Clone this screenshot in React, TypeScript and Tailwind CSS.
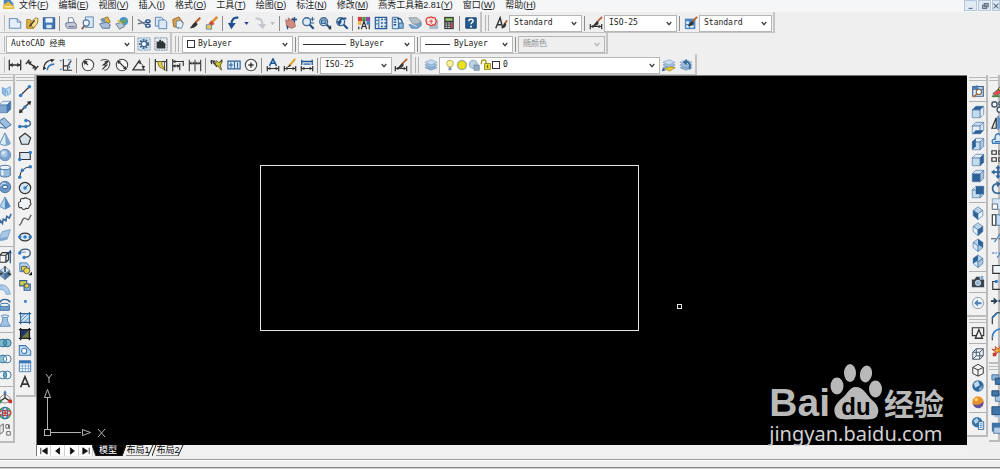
import type { ReactNode } from "react";

const menus = [
  ["文件", "F"],
  ["编辑", "E"],
  ["视图", "V"],
  ["插入", "I"],
  ["格式", "O"],
  ["工具", "T"],
  ["绘图", "D"],
  ["标注", "N"],
  ["修改", "M"],
  ["燕秀工具箱2.81", "Y"],
  ["窗口", "W"],
  ["帮助", "H"],
];

const NAVY = "#1d4f86";
const BLUE = "#2f7cc4";
const PALE = "#c9def0";
const STEEL = "#7fa6cc";
const INK = "#333";
const GOLD = "#e3b53a";

// top, left and right faces of a cube
const cube = (top: string, left: string, right: string) => (
  <g stroke="#3f6d9c" strokeWidth=".7">
    <path d="M8 1l5.500 4L8 9 2.500 5z" fill={top} />
    <path d="M2.500 5L8 9v6.500L2.500 11z" fill={left} />
    <path d="M13.500 5L8 9v6.500l5.500-4.500z" fill={right} />
  </g>
);

// front, top and side faces of a box seen from the front left
const box = (front: string, top: string, side: string) => (
  <g stroke="#3f6d9c" strokeWidth=".7">
    <path d="M1.500 5.500h9v9h-9z" fill={front} />
    <path d="M1.500 5.500l4-4h9l-4 4z" fill={top} />
    <path d="M10.500 5.500l4-4v9l-4 4z" fill={side} />
  </g>
);

const brush = (
  <>
    <path d="M15 1L9 7" stroke="#b5622d" strokeWidth="2" />
    <path d="M10 6c-3 0-3 4-6 5 3 1 7 0 7-4z" fill={INK} />
  </>
);

const dimension = (
  <>
    <path d="M1.500 9v6M14.500 9v6M2 12h12" stroke={INK} strokeWidth="1.400" />
    <path d="M2 12l3-2v4zM14 12l-3-2v4z" fill={INK} />
  </>
);

const rings = (a: string, b: string, c: string) => (
  <>
    <circle cx="5.500" cy="8" r="4.500" fill={a} />
    <circle cx="10.500" cy="8" r="4.500" fill={b} />
    <path d="M8 4.300a4.500 4.500 0 010 7.400 4.500 4.500 0 010-7.400z" fill={c} />
    <circle cx="5.500" cy="8" r="4.500" fill="none" stroke="#2b6b91" />
    <circle cx="10.500" cy="8" r="4.500" fill="none" stroke="#2b6b91" />
  </>
);

const layers = (
  <g stroke="#5c87b3" strokeWidth=".6">
    <path d="M1 11l7-3 7 3-7 3z" fill="#8fb2d6" />
    <path d="M1 8l7-3 7 3-7 3z" fill="#a9c6e2" />
    <path d="M1 5l7-3 7 3-7 3z" fill={PALE} />
  </g>
);

const lens = (
  <>
    <circle cx="6.500" cy="6.500" r="4.500" fill="#dcebf7" stroke="#3d678f" strokeWidth="1.500" />
    <path d="M10 10l4.500 4.500" stroke={NAVY} strokeWidth="2.400" />
  </>
);

const dot = (x: number, y: number) => <circle cx={x} cy={y} r="2" fill={BLUE} />;

const icons: Record<string, ReactNode> = {
  new: <path d="M1.500 3h9l4 4v7h-13zM10.500 3v4h4" fill="#e2eefa" stroke="#5080b0" />,
  open: (
    <>
      <path d="M2 14V4h4l1 2h6l-3 8z" fill={GOLD} stroke="#9a7422" />
      <path d="M6 8l6-6 3 1-1 6-5 5z" fill="#f5df8d" stroke="#9a7422" />
      <path d="M5 12l6-7" stroke={INK} strokeWidth="1.500" />
    </>
  ),
  save: (
    <>
      <path d="M1.500 2h13v12.500h-13z" fill="#3f78b8" stroke={NAVY} />
      <path d="M4 2.500h8v5H4z" fill="#f0f6fc" />
      <path d="M5 10h6v4H5z" fill="#dbe6f2" />
    </>
  ),
  print: (
    <>
      <path d="M5 2h5l2 6H5z" fill="#fff" stroke="#6c7794" />
      <path d="M2 8l9-1 3 2v5H4l-2-2z" fill="#c5cad9" stroke="#626b88" />
      <path d="M5 12h7" stroke="#626b88" />
    </>
  ),
  preview: (
    <>
      <path d="M5 1h9v12H5z" fill="#dceafa" stroke="#5080b0" />
      <circle cx="6" cy="8" r="3.500" fill="#eef6fd" stroke="#4f7599" strokeWidth="1.300" />
      <path d="M4 11l-3 4" stroke="#7c6047" strokeWidth="2" />
    </>
  ),
  publish: (
    <>
      <path d="M3 4l8-3 3 6-4 3z" fill={GOLD} stroke="#8c6a20" />
      <path d="M2 9l8-2 4 3-1 4H5z" fill="#a9bfd9" stroke="#526b8c" />
      <circle cx="6" cy="5" r="2.500" fill="#6799c9" />
    </>
  ),
  globe: (
    <>
      <circle cx="10" cy="6" r="5" fill="#4a97c9" />
      <path d="M6 4c4 3 5-3 7 1l-3 5z" fill="#6ba653" />
      <path d="M1 9l7-2 3 5-6 3z" fill="#b9c6d8" stroke="#657894" />
      <path d="M3 5l4 3" stroke={GOLD} strokeWidth="2" />
    </>
  ),
  cut: (
    <>
      <path d="M1 4l9 6M1 9l9-2" stroke="#60707f" strokeWidth="1.600" />
      <ellipse cx="12.500" cy="6" rx="2.500" ry="1.600" fill="none" stroke={NAVY} strokeWidth="1.500" />
      <ellipse cx="12.500" cy="11" rx="2.500" ry="1.800" fill="none" stroke={NAVY} strokeWidth="1.500" />
    </>
  ),
  copy: (
    <g fill="#dbe9f7" stroke="#4b7dae">
      <path d="M1.500 1.500h7l2 2v8h-9z" />
      <path d="M5.500 4.500h7l2 2v8h-9z" />
    </g>
  ),
  paste: (
    <>
      <path d="M2 4l7-3 5 7-5 6-6-2z" fill="#d8a24b" stroke="#8e6428" />
      <path d="M6 6l5-1 3 4-2 5-6-1z" fill="#e6f0fa" stroke="#5e85ad" />
    </>
  ),
  match: (
    <>
      <path d="M14 2L8 8" stroke="#b5622d" strokeWidth="2.500" />
      <path d="M9 7c-3 0-4 4-7 7 4 0 8-2 9-5z" fill={INK} />
    </>
  ),
  block: (
    <>
      <path d="M14 1L8 7" stroke="#d5902f" strokeWidth="3" />
      <path d="M7 5l4 4-4 2-3-2z" fill="#d4482c" />
      <path d="M1.500 10h6v5h-6z" fill="#f3c84a" stroke="#5080b0" />
    </>
  ),
  undo: (
    <>
      <path d="M13 2C8 1 5 4 5 10" fill="none" stroke="#1f4f92" strokeWidth="2.600" />
      <path d="M1 8h9l-5 7z" fill="#1f4f92" />
    </>
  ),
  redo: (
    <>
      <path d="M3 3c5-1 8 2 8 7" fill="none" stroke="#c3c6ca" strokeWidth="2.400" />
      <path d="M6 9h9l-4 6z" fill="#c3c6ca" />
    </>
  ),
  pan: (
    <>
      <path d="M2 4l3 2V2l3 3 2-3 2 5 1 5-4 2-6-2z" fill="#d28c80" stroke="#a0685f" />
      <path d="M12 1v6M9 4h6M4 11v4" stroke={NAVY} strokeWidth="1.500" />
    </>
  ),
  zoom: (
    <>
      {lens}
      <path d="M13 1v5M10.500 3.500h5M11 8h4" stroke={NAVY} />
    </>
  ),
  zoomWindow: (
    <>
      {lens}
      <path d="M4 4.500h5v4H4z" fill="#8db4db" stroke={NAVY} />
      <path d="M12 15l3-5v5z" fill={INK} />
    </>
  ),
  zoomBack: (
    <>
      {lens}
      <path d="M5 8c0-4 3-6 8-5" fill="none" stroke={NAVY} strokeWidth="2" />
      <path d="M2 6h6l-3 5z" fill={NAVY} />
    </>
  ),
  props: (
    <>
      <path d="M1 1h5v5H1z" fill="#d33d39" />
      <path d="M6 1h4v5H6z" fill="#4c9f50" />
      <path d="M10 1h5v5h-5z" fill="#8a4da1" />
      <path d="M1 6h4v4H1z" fill={GOLD} />
      <path d="M11 6h4v4h-4z" fill="#367fc4" />
      <path d="M5 15l3-9 3 9M6 12h4M2 12v3M14 10v5" fill="none" stroke={INK} strokeWidth="1.400" />
    </>
  ),
  center: (
    <>
      <path d="M1.500 1.500h13v13h-13z" fill="#d9e9f8" stroke="#2c5f94" strokeWidth="1.400" />
      <path d="M5.500 2v12M2 5h3M2 9h3" stroke="#2c5f94" />
      <path d="M8 4h2M12 4h2M8 8h2M12 8h2M8 12h2M12 12h2" stroke={NAVY} strokeWidth="1.800" />
    </>
  ),
  palettes: (
    <>
      <path d="M1.500 1.500h7v13h-7z" fill="#d9e9f8" stroke="#2c5f94" />
      <path d="M3 4h3M3 7h3M3 10h3" stroke={NAVY} strokeWidth="1.600" />
      <path d="M7 3c4-1 6 2 6 6" fill="none" stroke={NAVY} strokeWidth="1.600" />
      <path d="M9 8h5v6H9z" fill="#8fb7de" stroke="#2c5f94" />
    </>
  ),
  sheets: (
    <>
      <path d="M1 2h9l5 4-3 3H5z" fill="#b4bfc8" stroke="#8a98a4" />
      <path d="M1 10h10l4-3v4l-4 3H4z" fill="#6fa5cf" stroke="#5d86a8" />
      <path d="M2 8l8 4" stroke="#f3f7fa" />
    </>
  ),
  markup: (
    <>
      <path d="M5 4h10v11H5z" fill="#a9bccb" />
      <path d="M2 3q1-2 3-1 2-2 4 0 3-1 3 2 2 2 0 4 0 3-3 2-2 2-4 0-4 0-3-3-2-2 0-4z" fill="#fbe3e0" stroke="#de3c3c" strokeWidth="1.400" />
      <path d="M5 6h4M7 4v5" stroke="#de3c3c" />
    </>
  ),
  calc: (
    <>
      <path d="M2.500 1h11v14h-11z" fill="#343a3d" />
      <path d="M4 2.500h8v3H4z" fill="#95c96b" />
      <path d="M4 8h8M4 10.500h8M4 13h8" stroke="#d9dddd" strokeWidth="1.300" strokeDasharray="2 1" />
      <path d="M10 7.500h2V14h-2z" fill="#bf4e43" />
    </>
  ),
  help: (
    <>
      <path d="M2 2h12v12H2z" fill="#24598f" stroke="#153d68" />
      <path d="M5.500 6c0-3 5-3 5-.5 0 2-2.500 2-2.500 4" fill="none" stroke="#fff" strokeWidth="1.600" />
      <path d="M7 11h2v2H7z" fill="#fff" />
    </>
  ),
  textStyle: (
    <>
      <path d="M2 14l5-12 3 12M4 10h5" fill="none" stroke={INK} strokeWidth="1.600" />
      <path d="M15 5l-3 4" stroke="#b5622d" strokeWidth="2" />
      <path d="M13 8c-3 0-2 4-5 6 4 0 6-2 6-5z" fill={INK} />
    </>
  ),
  dimStyle: (
    <>
      {dimension}
      {brush}
    </>
  ),
  tableStyle: (
    <>
      <path d="M1 3h12v12H1z" fill="#4c86c2" />
      <path d="M2.500 6h3v3h-3zM2.500 10.500h3v3h-3zM7 10.500h4v3H7z" fill="#e3effa" />
      {brush}
    </>
  ),
  gear: (
    <>
      <path d="M1 1h14v14H1z" fill="#d5e4f1" stroke="#6990b5" strokeDasharray="2 1" />
      <circle cx="8" cy="8" r="4.500" fill="none" stroke="#3f6388" strokeWidth="2.500" strokeDasharray="2 1.200" />
      <circle cx="8" cy="8" r="3" fill="#f5f9fc" stroke="#3f6388" strokeWidth="1.200" />
    </>
  ),
  workspace: (
    <>
      <path d="M1 1h14v14H1z" fill="#e7edf2" stroke="#60768c" strokeDasharray="2 1" />
      <path d="M3 5h3V3h2v2l2-1 1 2 2 1v6H3z" fill="#2f3438" />
    </>
  ),
  dimLinear: (
    <>
      <path d="M1.500 2v12M14.500 2v12M2 8h12" stroke={INK} strokeWidth="1.500" />
      <path d="M2 8l3.500-2.500v5zM14 8l-3.500-2.500v5z" fill={INK} />
    </>
  ),
  dimAligned: (
    <>
      <path d="M1 7l4-5M11 14l4-5M4 5l8 6" stroke={INK} strokeWidth="1.600" />
      <path d="M3 4l5 0-3 4zM13 12l-5 0 3-4z" fill={INK} />
    </>
  ),
  dimArc: (
    <>
      <path d="M2 13C2 6 6 2 14 2" fill="none" stroke={INK} strokeWidth="1.300" />
      <path d="M6 14c0-4 3-7 8-7" fill="none" stroke={BLUE} strokeWidth="1.800" />
      <path d="M1 14l1-5 3 3zM14 2l-5-1 2 4z" fill={INK} />
    </>
  ),
  dimOrdinate: (
    <>
      <path d="M5 1v13h10M5 9h5l4-6M10 9v5" fill="none" stroke={INK} strokeWidth="1.300" />
      <path d="M1 3h3M1 13h2M10 2h4M12 6v6" stroke={BLUE} strokeWidth="1.400" strokeDasharray="2 1" />
    </>
  ),
  dimRadius: (
    <>
      <circle cx="8" cy="8" r="6.500" fill="#f7f7f7" stroke="#444" strokeWidth="1.200" />
      <path d="M8 8L4 4" stroke={INK} strokeWidth="1.300" />
      <path d="M3 3l5 1-4 4z" fill={INK} />
    </>
  ),
  dimJogged: (
    <>
      <path d="M3 3c6-3 12 0 10 6-1 3-3 5-6 5" fill="none" stroke="#555" strokeWidth="1.200" />
      <path d="M11 4L6 8h4l-5 5" fill="none" stroke={INK} strokeWidth="1.300" />
      <path d="M12 3l-5 1 3 3z" fill={INK} />
    </>
  ),
  dimDiameter: (
    <>
      <circle cx="8" cy="8" r="6.500" fill="#f7f7f7" stroke="#444" strokeWidth="1.200" />
      <path d="M4 4l8 8" stroke={INK} strokeWidth="1.300" />
      <path d="M3 3l4 1-3 3zM13 13l-4-1 3-3z" fill={INK} />
    </>
  ),
  dimAngular: (
    <>
      <path d="M15 13.500H1L9 2" fill="none" stroke={INK} strokeWidth="1.500" />
      <path d="M7 5c4 0 6 3 6 8" fill="none" stroke={INK} />
      <path d="M6 5l4-2v4zM13 13l-2-4h4z" fill={INK} />
    </>
  ),
  dimQuick: (
    <>
      <path d="M1.500 1v14M14.500 1v14M1 4h14" stroke={INK} strokeWidth="1.400" />
      <path d="M4 4l5 0 0 4 4 6-7-4z" fill="#e6d33c" stroke="#746d20" />
      <path d="M12 4v10" stroke={INK} />
    </>
  ),
  dimBaseline: (
    <>
      <path d="M2 1v14M10 6v8M14 3v6M2 4h12M2 9h8" stroke={INK} strokeWidth="1.300" />
      <path d="M2 4l3-2v4zM2 9l3-2v4zM10 9l-3-2v4z" fill={INK} />
    </>
  ),
  dimContinue: (
    <>
      <path d="M1.500 2v13M8 2v13M14.500 2v13M1 6h14" stroke={INK} strokeWidth="1.200" />
      <path d="M2 6l2-2v4zM7.500 6l-2-2v4zM8.500 6l2-2v4zM14 6l-2-2v4z" fill={INK} />
    </>
  ),
  leader: (
    <>
      <path d="M1 3l5 1M1 3l1 4M3 4l5 6M14 2l-4 5" stroke={INK} strokeWidth="1.500" />
      <path d="M7 3l3 2 4-1-2 4 1 6-4-5-3-1z" fill="#cfc333" stroke="#5f5b20" />
    </>
  ),
  tolerance: (
    <>
      <path d="M1 3.500h14v9H1z" fill="#dbe9f7" stroke="#2c6096" strokeWidth="1.300" />
      <path d="M8.500 4v8M2 8h5M4.500 5v6M12 5v6" stroke="#2c6096" strokeWidth="1.200" />
    </>
  ),
  centerMark: (
    <>
      <circle cx="8" cy="8" r="6.500" fill="#f7f7f7" stroke="#444" strokeWidth="1.200" />
      <path d="M8 5v6M5 8h6" stroke={INK} strokeWidth="1.600" />
    </>
  ),
  dimEdit: (
    <>
      {dimension}
      <path d="M4 9l4-8 4 8M6 6h4" fill="none" stroke="#1e5795" strokeWidth="1.800" />
    </>
  ),
  dimTextEdit: (
    <>
      {dimension}
      <path d="M14 1L7 9" stroke="#e0a22b" strokeWidth="2.400" />
      <path d="M8 7l-4 4 5-2z" fill={INK} />
    </>
  ),
  dimUpdate: (
    <>
      {dimension}
      <path d="M2 2v6M14 2v6M2 4h12" stroke="#1e5795" strokeWidth="1.500" />
      <path d="M4 7h8" stroke="#5588bd" strokeWidth="2" />
    </>
  ),
  layers,
  layerState: (
    <>
      {layers}
      <path d="M3 12l6-2 6 1-6 4z" fill="#e6cc35" stroke="#8b7a21" strokeWidth=".6" />
      <path d="M0 15l1-4 3 3z" fill={NAVY} />
    </>
  ),
  layerBack: (
    <>
      {layers}
      <path d="M12 13c2-6-1-9-4-9" fill="none" stroke="#3a6a9c" strokeWidth="2" />
      <path d="M4 5l5-4v7z" fill="#3a6a9c" />
    </>
  ),
  bulb: (
    <>
      <circle cx="8" cy="6" r="4.500" fill="#fbf19a" stroke="#a69a3d" />
      <path d="M6 11h4v4H6z" fill="#7e93ad" />
    </>
  ),
  sun: (
    <>
      <circle cx="8" cy="8" r="7" fill="#94bedf" />
      <circle cx="8" cy="8" r="5.500" fill="#efe21d" stroke="#b5a827" />
    </>
  ),
  freeze: (
    <>
      <circle cx="7" cy="7" r="5.500" fill="#bcd2e4" stroke="#7e99ae" />
      <path d="M8 8h7v7H8z" fill="#93adc3" stroke="#64849f" />
    </>
  ),
  lock: (
    <>
      <path d="M2 7V4c0-4 6-3 6 0v3" fill="none" stroke="#a89e20" strokeWidth="2" />
      <path d="M6 6h8v8H6z" fill="#e6da2e" stroke="#837a18" />
      <path d="M10 8v4" stroke="#6b641b" strokeWidth="1.500" />
    </>
  ),
  polysolid: (
    <>
      <path d="M5 4l4 2v8l-4-3z" fill="#8fbbe2" stroke="#6ba3d6" />
      <path d="M9 6l5-3v8l-3 2V8L9 9z" fill="#c6ddf1" stroke="#6ba3d6" />
    </>
  ),
  box: box("#7ea8d1", "#e4f0fa", "#3f77b0"),
  wedge: (
    <>
      <path d="M1 6l6-4 8 8-6 4z" fill="#9dbddc" stroke="#315f90" />
      <path d="M1 6v7l8 1z" fill="#d2e4f4" stroke="#315f90" />
    </>
  ),
  cone: (
    <>
      <path d="M8 1l6 12c-3 3-9 3-12 0z" fill="#dcebf7" stroke="#4d7baa" />
      <path d="M8 1l6 12c-1 1-3 2-5 2z" fill={STEEL} />
    </>
  ),
  sphere: (
    <>
      <circle cx="8" cy="8" r="6.500" fill="#7ba3cf" stroke="#5e88b8" />
      <circle cx="7" cy="6.500" r="4" fill="#a9c4e2" />
      <circle cx="6" cy="5.500" r="2" fill="#dce9f6" />
    </>
  ),
  cylinder: (
    <>
      <path d="M2 4v9c3 2.500 9 2.500 12 0V4z" fill="#9bbddd" stroke="#396a9d" />
      <ellipse cx="8" cy="4" rx="6" ry="2.500" fill="#e9f3fb" stroke="#396a9d" />
      <path d="M5 7v6" stroke="#eff6fc" strokeWidth="2" />
    </>
  ),
  torus: (
    <>
      <circle cx="8" cy="8" r="6.500" fill="#6d99c8" stroke="#44719f" />
      <ellipse cx="8" cy="8" rx="3" ry="2" fill="#eef5fb" stroke="#2c5c8e" />
      <path d="M3 7c1-3 3-4 6-3" fill="none" stroke="#cfe2f3" strokeWidth="1.500" />
    </>
  ),
  pyramid: (
    <>
      <path d="M8 1l6 11-6 3-6-3z" fill="#b7d3ec" stroke="#467aad" strokeWidth=".8" />
      <path d="M8 1l6 11-6 3z" fill="#4f87bf" />
    </>
  ),
  helix: <path d="M1 14l2-4 2 3 1-5 3 2 1-5 3 2 2-5" fill="none" stroke="#37699e" strokeWidth="1.800" />,
  planar: (
    <>
      <path d="M1 12l4-8 9-2-3 9z" fill="#a8c8e6" stroke="#6e9bc7" />
      <path d="M1 12l10-1v2L3 15z" fill={STEEL} />
    </>
  ),
  extrude: (
    <>
      <path d="M2 6h7v8H2zM2 6l3-3h7v8l-3 3M9 6l3-3" fill="#f5f8fa" stroke={INK} strokeWidth="1.400" />
      <path d="M14 15V2M12 4l2-3 1 3" stroke={NAVY} strokeWidth="1.400" fill="none" />
    </>
  ),
  presspull: (
    <>
      {cube("#dbe8f3", "#7395b6", "#4c7299")}
      <path d="M8 0v7M1 10l4-2M15 10l-4-2" stroke={INK} strokeWidth="1.600" />
    </>
  ),
  sweep: (
    <>
      <path d="M1 4c7-3 12 3 13 10h-5C9 10 6 8 1 9z" fill="#adcdea" stroke={STEEL} />
      <ellipse cx="2" cy="6.500" rx="1.500" ry="2.500" fill="#e9f3fb" stroke={STEEL} />
    </>
  ),
  revolve: (
    <>
      <path d="M2 8h11v6H2z" fill="#75a3cf" stroke="#2d6297" />
      <path d="M2 5c2-4 9-5 12 0" fill="none" stroke="#2d6297" strokeWidth="1.600" />
      <ellipse cx="7.500" cy="8" rx="5.500" ry="2" fill="#e9f3fb" stroke="#2d6297" />
    </>
  ),
  loft: (
    <>
      <path d="M4 2h8c-3 5 0 8 2 12H2C4 10 7 7 4 2z" fill="#a0c2e2" stroke="#5889ba" />
      <ellipse cx="8" cy="2.500" rx="4" ry="1.500" fill="#eaf3fb" stroke="#5889ba" />
    </>
  ),
  union: rings("#7fb9cf", "#7fb9cf", "#5d9fba"),
  subtract: rings("#8dc3d8", "#f3f6f8", "#f3f6f8"),
  intersect: rings("#f3f6f8", "#f3f6f8", "#6bafc9"),
  move3d: (
    <>
      <path d="M8 3v6l-6 4M8 9l6 4" fill="none" stroke={INK} strokeWidth="1.400" />
      <path d="M2 9l6-5 6 5v4l-6 2-6-2z" fill="none" stroke="#666" strokeWidth=".8" />
      <path d="M6 4l2-4 2 4z" fill={BLUE} />
      <path d="M0 11h4v4H0z" fill="#2d8850" />
      <path d="M12 11h4v4h-4z" fill="#cf2f2f" />
    </>
  ),
  rotate3d: (
    <g fill="none" strokeWidth="1.500">
      <circle cx="8" cy="8" r="6.500" stroke="#2f8c4b" />
      <ellipse cx="8" cy="8" rx="6.500" ry="3" stroke="#cf3b33" />
      <ellipse cx="8" cy="8" rx="3" ry="6.500" stroke="#2d6fb4" />
      <path d="M5 8h6M8 5v6" stroke="#cf3b33" />
    </g>
  ),
  align3d: (
    <>
      <path d="M2 5l4-3v9l-4 3z" fill="#eee" stroke="#555" />
      <path d="M9 3h3v4H9zM13 3v5M10 11h4v4h-4z" fill="#fff" stroke="#555" />
    </>
  ),
  line: (
    <>
      <path d="M3 13L13 3" stroke={INK} strokeWidth="1.600" />
      {dot(3, 13)}
      {dot(13, 3)}
    </>
  ),
  xline: (
    <>
      <path d="M2 14L14 2" stroke={INK} strokeWidth="1.600" />
      <path d="M1 15l1-5 4 4zM15 1l-1 5-4-4z" fill={INK} />
      {dot(8, 8)}
    </>
  ),
  polyline: (
    <>
      <path d="M2 12h8c6 0 5-7 0-7H8" fill="none" stroke="#375d83" strokeWidth="1.500" />
      {dot(2, 12)}
      {dot(9, 12)}
      {dot(9, 5)}
    </>
  ),
  polygon: <path d="M8 1.500l6.500 5L12 14H4L1.500 6.500z" fill="#d5e2ec" stroke={INK} strokeWidth="1.300" />,
  rectangle: (
    <>
      <path d="M2 4h12v8H2z" fill="#dce8f2" stroke={INK} strokeWidth="1.300" />
      {dot(2, 12)}
      {dot(14, 4)}
    </>
  ),
  arc: (
    <>
      <path d="M2 14C2 8 6 3 14 2" fill="none" stroke={INK} strokeWidth="1.300" />
      {dot(2, 14)}
      {dot(5, 6)}
      {dot(14, 2)}
    </>
  ),
  circle: (
    <>
      <circle cx="8" cy="8" r="6.500" fill="#d5e5f2" stroke={INK} strokeWidth="1.300" />
      <path d="M8 8l4-4" stroke={INK} />
      {dot(8, 8)}
    </>
  ),
  cloud: (
    <path d="M3 5q-1-4 3-3 3-2 5 0 4 0 3 4 2 3-1 4 0 4-4 3-3 3-5-1-4 1-3-3-2-2 2-4z" fill="#f2f5f8" stroke={INK} strokeWidth="1.200" />
  ),
  spline: <path d="M1 14C5 14 4 5 8 6s3 5 7-4" fill="none" stroke="#555" strokeWidth="1.400" />,
  ellipse: (
    <>
      <ellipse cx="8" cy="8" rx="6.500" ry="4.500" fill="#dbe8f3" stroke={INK} strokeWidth="1.300" />
      {dot(2, 8)}
      {dot(14, 8)}
      {dot(8, 8)}
    </>
  ),
  ellipseArc: (
    <>
      <path d="M2 8c1-6 12-6 12 0 0 4-3 5-7 5" fill="none" stroke="#3a5a7b" strokeWidth="1.400" />
      <path d="M4 7h5" stroke="#5685b3" />
      {dot(2, 8)}
      {dot(7, 13)}
    </>
  ),
  insertBlock: (
    <>
      <path d="M2 1h8l3 4v6H2z" fill="#b9d4ed" stroke="#3979b7" />
      <path d="M4 5h6v5H4z" fill="#e7d64d" stroke="#555" />
      <circle cx="10" cy="10" r="3.500" fill="#e7d64d" stroke="#555" />
      <path d="M12 15l4-4v4z" fill="#111" />
    </>
  ),
  makeBlock: (
    <>
      <path d="M2 3h8v6H2z" fill="#dfcf45" stroke="#2b5f93" strokeWidth="1.200" />
      <path d="M7 7h7v7H7z" fill="#9bc1e5" stroke="#2b5f93" strokeWidth="1.200" />
      <circle cx="10" cy="9" r="2.500" fill="#e6d752" stroke="#555" />
    </>
  ),
  point: <path d="M7 7h3v3H7z" fill={BLUE} />,
  hatch: (
    <>
      <path d="M3 3h10v10H3zM3 1v14M13 1v14M1 3h14M1 13h14" fill="#d5e5f3" stroke="#2f618f" strokeWidth="1.200" />
      <path d="M3 8l5-5M3 12l9-9M7 13l6-6" stroke={BLUE} />
    </>
  ),
  gradient: (
    <>
      <path d="M3 3h10v10H3z" fill="#6b7a40" />
      <path d="M3 3h10L3 13z" fill="#22366e" />
      <path d="M3 1v14M13 1v14M1 3h14M1 13h14" stroke="#222" strokeWidth="1.600" />
    </>
  ),
  region: (
    <>
      <path d="M1.500 3h7l6 6v5h-13z" fill="#c6dff3" stroke="#3d77ae" strokeWidth="1.200" />
      <circle cx="7" cy="9" r="3" fill="#f5fafd" stroke="#3d77ae" strokeWidth="1.200" />
    </>
  ),
  table: (
    <>
      <path d="M1.500 2h13v12.500h-13z" fill="#f3f8fd" stroke="#3975b3" />
      <path d="M1.500 2h13v3h-13z" fill="#3975b3" />
      <path d="M2 8h12M2 11h12M5 5v9M8.500 5v9M12 5v9" stroke="#7eaad6" />
    </>
  ),
  text: <path d="M3 14L8 2l5 12M4.500 10.500h7" fill="none" stroke={INK} strokeWidth="1.900" />,
  namedViews: (
    <>
      <path d="M2 3h12v11H2zM2 6h12" fill="#e6f0fa" stroke="#345f8c" strokeWidth="1.300" />
      <path d="M1 5l6-4 2 5z" fill="#477db2" />
      <circle cx="9" cy="9" r="3" fill="#fff" stroke="#7c6652" strokeWidth="1.300" />
      <path d="M7 11l-4 4" stroke="#b16d39" strokeWidth="1.800" />
    </>
  ),
  top: box("#c3daef", "#2d6299", "#e3eef8"),
  bottom: (
    <>
      {box("#e3eef8", "#c3daef", "#d6e6f4")}
      <path d="M1.500 14.500l4-4h9l-4 4z" fill="#2d6299" />
    </>
  ),
  left: (
    <>
      {box("#c3daef", "#e3eef8", "#acc9e3")}
      <path d="M1.500 5.500l4-4v9l-4 4z" fill="#2d6299" />
    </>
  ),
  right: box("#c3daef", "#e3eef8", "#2d6299"),
  front: box("#2d6299", "#d1e3f3", "#a8c6e2"),
  back: (
    <>
      {box("#c3daef", "#e3eef8", "#acc9e3")}
      <path d="M5.500 1.500h9v9h-9z" fill="#2d6299" />
    </>
  ),
  swIso: cube("#b9d3ea", "#2d6299", "#e8f2fa"),
  seIso: cube("#b9d3ea", "#e8f2fa", "#2d6299"),
  neIso: (
    <>
      {cube("#b9d3ea", "#dbe9f5", "#a8c6e2")}
      <path d="M8 1l5.500 4v6L8 7z" fill="#2d6299" />
    </>
  ),
  nwIso: (
    <>
      {cube("#b9d3ea", "#dbe9f5", "#a8c6e2")}
      <path d="M8 1L2.500 5v6L8 7z" fill="#2d6299" />
    </>
  ),
  camera: (
    <>
      <path d="M1 5h3l2-3h4v3h5v9H1z" fill="#3a4550" />
      <circle cx="8" cy="9" r="3" fill="#91b5d3" stroke="#dce5ec" />
      <path d="M11 1h3v4h-3z" fill="#77a9d5" />
    </>
  ),
  previous: (
    <>
      <circle cx="8" cy="8" r="6.500" fill="#edf3f8" stroke="#8999a8" />
      <path d="M12 7H8V4L3.500 8 8 12V9.500h4z" fill="#4c83b5" />
    </>
  ),
  wire2d: (
    <>
      <path d="M1.500 2h13v9h-13z" fill="none" stroke={INK} strokeWidth="1.300" />
      <path d="M5 14l4-10 4 10z" fill="#f5f5f5" stroke={INK} strokeWidth="1.500" />
    </>
  ),
  wire3d: (
    <path d="M2 6h8v8H2zM2 6l4-4h8v8l-4 4M10 6l4-4M6 2v8h8M6 10l-4 4" fill="none" stroke="#42586c" strokeWidth="1.100" />
  ),
  hidden: (
    <path d="M8 1.500l6 3.500v7l-6 3-6-3V5zM2 5l6 3 6-3M8 8v7" fill="#f8f8f8" stroke={INK} strokeWidth="1.100" />
  ),
  realistic: (
    <>
      <circle cx="8" cy="8" r="6.500" fill="#316b9c" />
      <path d="M3 5l5-3 2 5-5 3z" fill="#c0dbef" />
      <path d="M9 11l4-4v4l-3 3z" fill="#83b1d5" />
    </>
  ),
  conceptual: (
    <>
      <circle cx="8" cy="8" r="6.500" fill="#e8932b" />
      <path d="M2 10c3 2 9 2 12-3 1 5-2 8-6 8-3 0-5-2-6-5z" fill="#6150a0" />
      <circle cx="6" cy="5" r="2" fill="#fbd47a" />
    </>
  ),
  styles: (
    <>
      <circle cx="7" cy="7" r="6" fill="#3974a7" />
      <path d="M3 5l4-3 2 4-4 3z" fill="#b2d2ea" />
      <path d="M8.500 6.500h6v9h-6z" fill="#e9f2fa" stroke="#2e659a" />
      <path d="M10 9h3M10 11h3M10 13h3" stroke={BLUE} />
    </>
  ),
  erase: (
    <>
      <path d="M2 11l6-5 4 3-6 5z" fill="#d9534c" stroke="#666" />
      <path d="M1 14h10" stroke="#468248" strokeWidth="2" />
      <path d="M8 6l5-5 3 3-4 5z" fill="#f0d15d" stroke={INK} />
    </>
  ),
  duplicate: (
    <g fill="#f5f8fa" stroke="#43576c" strokeWidth="1.600">
      <circle cx="4" cy="5" r="3" />
      <circle cx="11" cy="4" r="2" />
      <circle cx="10" cy="11" r="3" />
    </g>
  ),
  mirror: (
    <>
      <path d="M6 2v12H1z" fill="#eee" stroke={INK} strokeWidth="1.400" />
      <path d="M10 2v12h5z" fill="#bcd7ef" stroke={BLUE} />
      <path d="M8 0v16" stroke={BLUE} strokeWidth="1.500" />
    </>
  ),
  offset: (
    <path d="M2 13c-2-4 1-5 3-5-2-8 8-8 6 0 4 0 5 3 3 5zM4 11h8" fill="#d9e9f7" stroke="#3976b3" strokeWidth="1.500" />
  ),
  array: (
    <path d="M1 2h5v4H1zM9 2h5v4H9zM1 10h5v4H1zM9 10h5v4H9z" fill="#fafafa" stroke={INK} strokeWidth="1.400" />
  ),
  move: (
    <>
      <path d="M8 2v12M2 8h12" stroke="#2c659f" strokeWidth="2" />
      <path d="M5 4l3-4 3 4zM5 12l3 4 3-4zM4 5v6L0 8zM12 5v6l4-3z" fill="#2c659f" />
    </>
  ),
  rotate: (
    <>
      <path d="M7 3C0 4 0 14 8 14c4 0 6-3 6-6" fill="none" stroke="#386899" strokeWidth="2" />
      <path d="M6 0l6 3-5 4z" fill="#386899" />
    </>
  ),
  scale: (
    <>
      <path d="M1.500 2h12v12h-12z" fill="#d5e5f3" stroke="#8ba1b5" />
      <path d="M1.500 8h6v6h-6z" fill="#fff" stroke="#52677b" />
    </>
  ),
  stretch: (
    <>
      <path d="M1.500 2h4v12h-4z" fill="#fff" stroke={INK} strokeWidth="1.300" />
      <path d="M6 2h4l5 12H6z" fill="#c5dcf0" stroke="#45789f" />
    </>
  ),
  trim: (
    <>
      <path d="M0 10h6M9 10h7" stroke={INK} />
      <path d="M4 14L12 2" stroke={BLUE} strokeWidth="1.400" />
    </>
  ),
  extend: <path d="M1 8h6M9 8h4M7 13l7-9" stroke={BLUE} strokeWidth="1.300" strokeDasharray="3 1" />,
  breakPoint: (
    <>
      <path d="M2 4h13v9H2z" fill="#eef3f7" stroke={INK} strokeWidth="1.300" />
      {dot(12, 4)}
    </>
  ),
  breakGap: (
    <>
      <path d="M6 4H2v9h13V4h-3" fill="none" stroke={INK} strokeWidth="1.300" />
      {dot(6, 4)}
      {dot(12, 4)}
    </>
  ),
  join: (
    <>
      <path d="M0 8h5M11 8h5" stroke={INK} strokeWidth="2" />
      <path d="M3 4l5 4-5 4zM13 4L8 8l5 4z" fill="#25425f" />
    </>
  ),
  chamfer: (
    <>
      <path d="M1.500 15V7l5-5H16" fill="none" stroke={INK} strokeWidth="1.300" />
      <path d="M1.500 8l6-6" stroke={BLUE} strokeWidth="1.600" />
    </>
  ),
  fillet: (
    <>
      <path d="M1.500 15v-3M13 2h3" stroke={INK} strokeWidth="1.300" />
      <path d="M1.500 12C1.500 6 6 2 13 2" fill="none" stroke={BLUE} strokeWidth="1.700" />
    </>
  ),
  explode: (
    <>
      <path d="M1 7l4 1V4l3 3 5-5-3 6 3 3-5-1-3 4v-4z" fill="#e9b23c" stroke="#c23c2f" />
      <path d="M10 2h3v3h-3zM2 11h4v4H2z" fill="#c23c2f" />
    </>
  ),
  toFront: (
    <>
      <path d="M1 2h8v6H1z" fill="#8fb3d6" stroke="#49739b" />
      <path d="M5 6h9v7H5z" fill="#3f74a8" stroke="#1d4872" />
    </>
  ),
  toBack: (
    <>
      <path d="M5 6h9v8H5z" fill="#a5c3df" stroke="#49739b" />
      <path d="M1 2h8v6H1z" fill="#3f74a8" stroke="#1d4872" />
    </>
  ),
  above: (
    <>
      <path d="M4 9h11v5H4z" fill="#a5c3df" />
      <path d="M1 2h13v9H1z" fill="#3f74a8" stroke="#1d4872" />
    </>
  ),
  below: (
    <>
      <path d="M1 2h13v10H1z" fill="#3f74a8" />
      <path d="M3 7h12v7H3z" fill="#b4cde5" stroke="#49739b" />
    </>
  ),
};

function Icon({ name, small }: { name: string; small?: boolean }) {
  return (
    <svg viewBox="0 0 16 16" fill="none" className={small ? "size-3 shrink-0" : "size-[14px] shrink-0"}>
      {icons[name]}
    </svg>
  );
}

function Tool({ name }: { name: string }) {
  return (
    <button type="button" aria-label={name} className="flex w-[17px] h-4 shrink-0 items-center justify-center">
      <Icon name={name} />
    </button>
  );
}

function Divider() {
  return (
    <div className="flex w-[5px] shrink-0 justify-center">
      <div className="h-[15px] w-px bg-[#8c8c8c]" />
    </div>
  );
}

// "|" puts a divider between the tools
function Tools({ names }: { names: string }) {
  return names.split(" ").map((name, i) => (name === "|" ? <Divider key={i} /> : <Tool key={i} name={name} />));
}

function More({ label, color }: { label: string; color: string }) {
  return (
    <button type="button" aria-label={label} className="flex w-[9px] h-4 shrink-0 items-center justify-center">
      <svg viewBox="0 0 6 4" className="h-[3px] w-[5px]">
        <path d="M0 0h6L3 4z" fill={color} />
      </svg>
    </button>
  );
}

interface BarProps {
  first?: boolean;
  children: ReactNode;
}

function Bar({ first, children }: BarProps) {
  return (
    <div className="flex h-[21px] shrink-0 items-center border-r-2 border-b border-[#c4c4c4] pt-[2px] pr-px">
      {first ? (
        <div className="mr-px ml-1 h-4 w-px bg-[#bdbdbd]" />
      ) : (
        <div className="mr-[3px] ml-[3px] h-4 w-1 border-x border-[#b4b4b4]" />
      )}
      {children}
    </div>
  );
}

interface ComboProps {
  label: string;
  value: string;
  width: string;
  before?: ReactNode;
  disabled?: boolean;
}

function Combo({ label, value, width, before, disabled }: ComboProps) {
  return (
    <div
      className={`relative flex h-[17px] shrink-0 items-center border border-[#b5b5b5] pl-1 ${width} ${
        disabled ? "bg-[#efefef] text-[#8d8d8d]" : "bg-white text-[#222]"
      }`}
    >
      {before}
      <select
        aria-label={label}
        disabled={disabled}
        className="min-w-0 flex-1 appearance-none font-['DejaVu_Sans_Mono','Noto_Sans_CJK_SC',monospace] text-[8px] leading-[14px] opacity-100 outline-none"
      >
        <option>{value}</option>
      </select>
      <svg viewBox="0 0 8 6" className="pointer-events-none absolute right-1 h-[5px] w-[6px]">
        <path d="M1 1l3 3.500L7 1" fill="none" stroke={disabled ? "#b5b5b5" : "#444"} strokeWidth="1.800" />
      </svg>
    </div>
  );
}

function Swatch() {
  return <span className="mr-[3px] size-2 shrink-0 border border-[#333] bg-white" />;
}

interface PaletteProps {
  names: string;
  className?: string;
  divider?: string;
}

function Palette({ names, className = "", divider = "h-[5px]" }: PaletteProps) {
  return (
    <div className={`flex flex-col border-r-2 border-b-2 border-[#bcbcbc] bg-[#f1f1f1] pt-[2px] pb-1 ${className}`}>
      <div className="mb-[2px] h-1 shrink-0 self-stretch border-y border-[#b8b8b8]" />
      {names.split(" ").map((name, i) =>
        name === "|" ? (
          <div key={i} className={`flex shrink-0 items-center self-stretch ${divider}`}>
            <div className="h-px flex-1 bg-[#b0b0b0]" />
          </div>
        ) : (
          <Tool key={i} name={name} />
        )
      )}
    </div>
  );
}

function Drawing() {
  return (
    <svg className="absolute inset-0 size-full" fill="none" stroke="#e6e6e6">
      <rect x="223.500" y="89.500" width="378" height="165" />
      <rect x="640.500" y="228.500" width="4" height="4" />
      <g stroke="#b4b4b4">
        <rect x="7.500" y="353.500" width="6" height="6" />
        <path d="M10.500 353V322M14 356.500h30M10.500 313.500l-3 8h6zM53.500 356.500l-8-3v6z" />
        <path d="M9 298l3 4 3-4M12 302v5M61 353l7 8M68 353l-7 8" />
      </g>
    </svg>
  );
}

function Watermark() {
  return (
    <div className="absolute right-[23px] -bottom-[3px] text-[#b9b9b9]">
      <div className="flex items-end">
        <span className="font-['Liberation_Sans',sans-serif] text-[39px] leading-[34px] font-bold">Bai</span>
        <div className="relative h-[56px] w-[52px]">
          <svg viewBox="0 0 52 56" className="size-full" fill="#b9b9b9">
            <ellipse cx="7" cy="22" rx="6.500" ry="8.500" />
            <ellipse cx="20" cy="9" rx="6" ry="9" />
            <ellipse cx="36" cy="10" rx="6" ry="8.500" transform="rotate(12 36 10)" />
            <ellipse cx="45.500" cy="25" rx="6.500" ry="8.500" />
            <path d="M26 23c7 0 10 7 16 13 6 5 8 10 5 16-3 5-13 3-21 3s-17 2-20-3c-4-7 0-12 5-17 6-4 8-12 15-12z" />
          </svg>
          <span className="absolute inset-x-0 bottom-0 text-center font-['Liberation_Sans',sans-serif] text-[24px] leading-[26px] font-bold text-black">
            du
          </span>
        </div>
        <span className="ml-[2px] font-['Noto_Sans_CJK_SC',sans-serif] text-[30px] leading-[35px] font-bold">
          经验
        </span>
      </div>
      <div className="font-['Noto_Sans',sans-serif] text-[20px] leading-[28px] text-[#d0d0d0]">jingyan.baidu.com</div>
    </div>
  );
}

const navPaths = [
  ["第一个", "M2 1v8M10 1v8L4 5z"],
  ["上一个", "M8 1v8L3 5z"],
  ["下一个", "M4 1v8l5-4z"],
  ["最后一个", "M10 1v8M2 1v8l6-4z"],
];

function LayoutTabs() {
  return (
    <div className="flex h-[11px] shrink-0 bg-[#f0f0f0]">
      {navPaths.map(([label, d]) => (
        <button
          key={label}
          type="button"
          aria-label={label}
          className="flex w-[14px] items-center justify-center border-r border-[#d0d0d0] bg-white"
        >
          <svg viewBox="0 0 12 10" className="h-2 w-[10px]" fill="#111" stroke="#111">
            <path d={d} />
          </svg>
        </button>
      ))}
      {["模型", "布局1", "布局2"].map((tab, i) => (
        <button
          key={tab}
          type="button"
          className={`relative flex w-[30px] items-center justify-center font-['Liberation_Sans','Noto_Sans_CJK_SC',sans-serif] text-[9px] leading-[11px] ${
            i === 0 ? "text-white" : "text-black"
          }`}
        >
          <svg viewBox="0 0 34 11" preserveAspectRatio="none" className="absolute inset-y-0 -left-[1px] h-full w-[34px]">
            <path
              d={i === 0 ? "M0 0l4 11h26l4-11z" : "M0 11L4 0M4 11h22l5-11"}
              fill={i === 0 ? "#000" : "none"}
              stroke="#222"
            />
          </svg>
          <span className="relative">{tab}</span>
        </button>
      ))}
    </div>
  );
}

const windowButtons = [
  ["最小化", "M2 8h5"],
  ["还原", "M4 2h5v4H4zM2 4h5v4H2z"],
  ["关闭", "M2 2l6 6M8 2L2 8"],
];

export default function App() {
  return (
    <div className="flex min-h-screen flex-col overflow-hidden bg-[#efefef] font-['Liberation_Sans','Noto_Sans_CJK_SC',sans-serif] text-[#222]">
      <header className="flex h-3 items-start bg-[#f4f6f8]">
        <svg viewBox="0 0 16 14" className="mt-[-1px] ml-[3px] h-[11px] w-3">
          <path d="M1 1h9l4 5v7H1z" fill="#4c86bd" />
          <path d="M0 8l7-5 8 7v3H0z" fill="#e9bc36" />
          <path d="M2 10h11" stroke="#fff6cf" strokeWidth="1.500" />
        </svg>
        <nav className="ml-1 flex gap-[10px]">
          {menus.map(([name, key]) => (
            <button key={key} type="button" className="text-[9px] leading-[11px] whitespace-nowrap">
              {name}(<span className="underline">{key}</span>)
            </button>
          ))}
        </nav>
        <div className="ml-auto flex gap-px overflow-hidden">
          {windowButtons.map(([label, d], i) => (
            <button
              key={label}
              type="button"
              aria-label={label}
              className={`flex h-[11px] items-center justify-center border border-[#b5c8da] bg-[#dfeaf5] ${
                i === 2 ? "w-[8px]" : "w-[13px]"
              }`}
            >
              <svg viewBox="0 0 10 10" className="size-2 shrink-0" fill="none" stroke="#5f6f80" strokeWidth="1.400">
                <path d={d} />
              </svg>
            </button>
          ))}
        </div>
      </header>

      <div className="flex">
        <Bar first>
          <Tools names="new open save | print preview publish globe | cut copy paste match block | undo" />
          <More label="undo list" color="#2b3f8c" />
          <Tools names="redo" />
          <More label="redo list" color="#bbb" />
          <Tools names="| pan zoom zoomWindow zoomBack | props center palettes sheets markup calc | help" />
        </Bar>
        <Bar>
          <Tools names="textStyle" />
          <Combo label="文字样式" value="Standard" width="w-[73px]" />
          <Tools names="| dimStyle" />
          <Combo label="标注样式" value="ISO-25" width="w-[73px]" />
          <Tools names="| tableStyle" />
          <Combo label="表格样式" value="Standard" width="w-[73px]" />
        </Bar>
      </div>

      <div className="flex">
        <Bar first>
          <Combo label="工作空间" value="AutoCAD 经典" width="w-[129px]" />
          <Tools names="gear workspace" />
        </Bar>
        <Bar>
          <Combo label="颜色" value="ByLayer" width="w-[111px]" before={<Swatch />} />
          <Divider />
          <Combo
            label="线型"
            value="ByLayer"
            width="w-[117px]"
            before={<span className="mr-1 h-px w-[43px] shrink-0 bg-[#333]" />}
          />
          <Divider />
          <Combo
            label="线宽"
            value="ByLayer"
            width="w-[93px]"
            before={<span className="mr-1 h-px w-[25px] shrink-0 bg-[#333]" />}
          />
          <Divider />
          <Combo label="打印样式" value="随颜色" width="w-[87px]" disabled />
        </Bar>
      </div>

      <div className="flex">
        <Bar first>
          <Tools names="dimLinear dimAligned dimArc dimOrdinate | dimRadius dimJogged dimDiameter dimAngular | dimQuick dimBaseline dimContinue | leader tolerance centerMark | dimEdit dimTextEdit dimUpdate |" />
          <Combo label="当前标注样式" value="ISO-25" width="w-[72px]" />
          <Tools names="dimStyle" />
        </Bar>
        <Bar>
          <Tools names="layers" />
          <Combo
            label="图层"
            value="0"
            width="w-[221px]"
            before={
              <>
                <Icon name="bulb" small />
                <Icon name="sun" small />
                <Icon name="freeze" small />
                <Icon name="lock" small />
                <Swatch />
              </>
            }
          />
          <Tools names="layerState layerBack" />
        </Bar>
      </div>

      <div className="flex flex-1">
        <div className="w-[15px] shrink-0">
          <Palette
            className="items-end"
            divider="h-[6px]"
            names="polysolid box wedge cone sphere cylinder torus pyramid helix planar | extrude presspull sweep revolve loft | union subtract intersect | move3d rotate3d align3d"
          />
        </div>
        <div className="ml-px w-5 shrink-0">
          <Palette
            className="items-center [&>*:nth-child(5n)]:mb-px"
            names="line xline polyline polygon rectangle arc circle cloud spline ellipse ellipseArc insertBlock makeBlock point hatch gradient region table text"
          />
        </div>
        <main className="flex min-w-0 flex-1 flex-col border-t border-l border-[#777]">
          <div className="relative flex-1 bg-black">
            <Drawing />
            <Watermark />
          </div>
          <LayoutTabs />
        </main>
        <div className="w-[21px] shrink-0">
          <Palette
            className="items-center pl-[2px]"
            names="namedViews | top bottom left right front back | swIso seIso neIso nwIso | camera | previous"
          />
          <Palette className="items-center pl-[2px]" names="wire2d | wire3d hidden realistic conceptual | styles" />
        </div>
        <div className="ml-px w-[11px] shrink-0 overflow-hidden">
          <Palette
            className="items-start [&>*:nth-child(5n)]:mb-px"
            names="erase duplicate mirror offset array move rotate scale stretch trim extend breakPoint breakGap join chamfer fillet explode"
          />
          <Palette className="items-start" names="toFront toBack above below" />
        </div>
      </div>

      <footer className="flex h-[13px] shrink-0 flex-col justify-between pt-[3px]">
        <div className="h-[2px] border-t border-[#999] bg-white" />
        <div className="h-[2px] border-t border-[#888] bg-[#ccc]" />
      </footer>
    </div>
  );
}
